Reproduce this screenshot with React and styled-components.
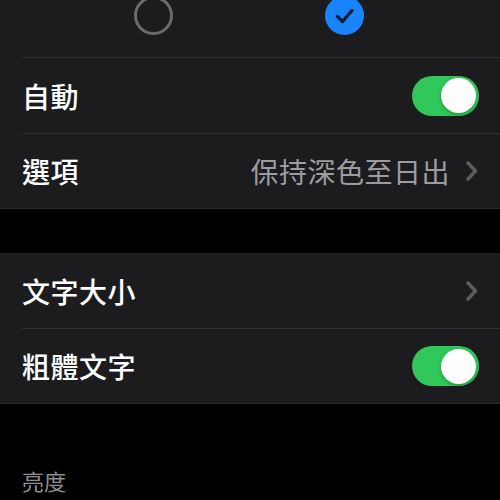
import React from "react";
import styled, { createGlobalStyle } from "styled-components";

const Global = createGlobalStyle`
  html, body { margin: 0; padding: 0; background: #000; }
  body {
    font-family: "Noto Sans CJK TC", "Noto Sans", sans-serif;
    -webkit-font-smoothing: antialiased;
  }
`;

const Page = styled.div`
  width: 500px;
  height: 500px;
  overflow: hidden;
  background: #000;
  display: flex;
  flex-direction: column;
`;

const Group = styled.section`
  background: #1c1c1e;
  display: flex;
  flex-direction: column;
  border-bottom: 1px solid #2a2a2c;
`;

const Spacer = styled.div`
  height: ${(p) => p.$h}px;
  flex: none;
`;

const AppearancePicker = styled.div`
  height: 57px;
  display: flex;
  align-items: flex-start;
  padding-left: 134px;
  gap: 152px;
`;

const Radio = styled.div`
  width: 39px;
  height: 39px;
  margin-top: -4px;
  box-sizing: border-box;
  border-radius: 50%;
  display: flex;
  align-items: center;
  justify-content: center;
  border: ${(p) => (p.$checked ? "none" : "3px solid #6c6c70")};
  background: ${(p) => (p.$checked ? "#1a84ff" : "transparent")};
`;

const Row = styled.div`
  height: ${(p) => p.$h || 75}px;
  display: flex;
  align-items: center;
  margin-left: 22px;
  padding-right: 21px;
  border-top: ${(p) => (p.$divider ? "1px solid #333336" : "none")};
  box-sizing: border-box;
`;

const Label = styled.span`
  flex: 1;
  color: #fff;
  font-size: 28px;
  font-weight: 500;
  letter-spacing: 0.5px;
`;

const Value = styled.span`
  color: #9c9ca1;
  font-size: 28px;
  font-weight: 400;
  letter-spacing: 0.5px;
  margin-right: 14px;
`;

const Switch = styled.div`
  width: 67px;
  height: 40px;
  border-radius: 20px;
  background: ${(p) => (p.$on ? "#30c85a" : "#39393d")};
  display: flex;
  align-items: center;
  justify-content: ${(p) => (p.$on ? "flex-end" : "flex-start")};
  padding: 0 3px;
  box-sizing: border-box;
`;

const Knob = styled.div`
  width: 35px;
  height: 35px;
  border-radius: 50%;
  background: #fff;
  box-shadow: 0 2px 4px rgba(0, 0, 0, 0.25);
`;

const SectionHeader = styled.div`
  color: #8e8e93;
  font-size: 22px;
  padding-left: 22px;
  margin-top: 60px;
`;

const Chevron = () => (
  <svg width="15" height="22" viewBox="0 0 15 22" fill="none">
    <path d="M4 3 L11.5 11 L4 19" stroke="#5b5b5f" strokeWidth="3.6" strokeLinecap="round" strokeLinejoin="round" />
  </svg>
);

const Check = () => (
  <svg width="24" height="20" viewBox="0 0 24 20" fill="none">
    <path d="M4.5 10.5 L9.5 15.5 L19 4.5" stroke="#0f1d36" strokeWidth="3.4" strokeLinecap="round" strokeLinejoin="round" />
  </svg>
);

export default function App() {
  return (
    <Page>
      <Global />
      <Group>
        <AppearancePicker>
          <Radio />
          <Radio $checked>
            <Check />
          </Radio>
        </AppearancePicker>
        <Row $divider $h={76}>
          <Label>自動</Label>
          <Switch $on>
            <Knob />
          </Switch>
        </Row>
        <Row $divider>
          <Label>選項</Label>
          <Value>保持深色至日出</Value>
          <Chevron />
        </Row>
      </Group>
      <Spacer $h={44} />
      <Group>
        <Row>
          <Label>文字大小</Label>
          <Chevron />
        </Row>
        <Row $divider>
          <Label>粗體文字</Label>
          <Switch $on>
            <Knob />
          </Switch>
        </Row>
      </Group>
      <SectionHeader>亮度</SectionHeader>
    </Page>
  );
}
